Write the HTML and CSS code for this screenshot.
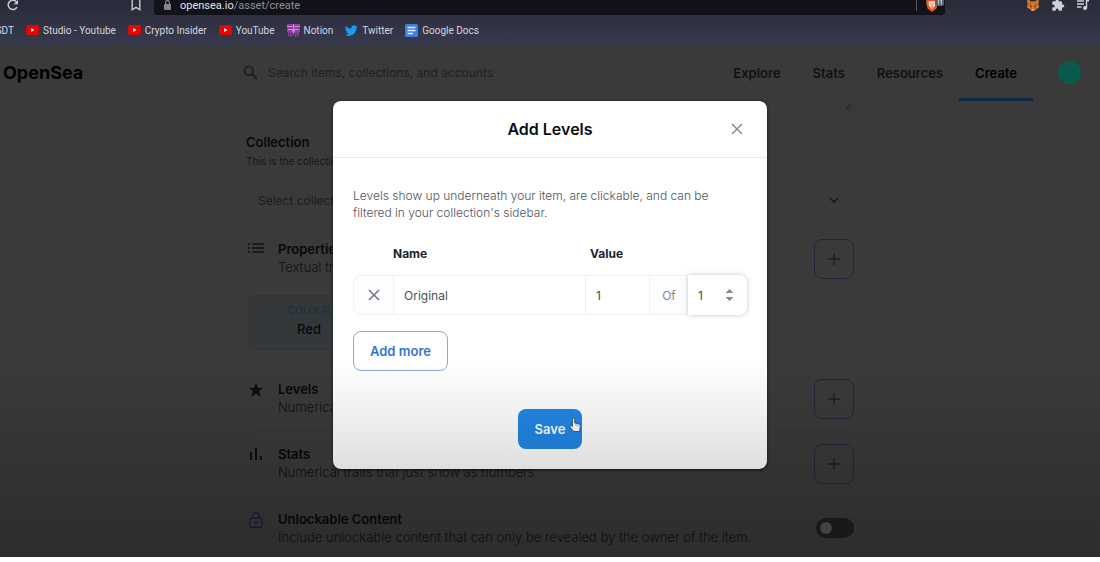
FILE: index.html
```html
<!DOCTYPE html>
<html lang="en">
<head>
<meta charset="utf-8">
<title>OpenSea - Create</title>
<link rel="stylesheet" href="styles.css">
</head>
<body>
<div class="window">
  <div class="chrome">
    <div class="toolbar">
      <button class="tool reload" aria-label="Reload"><svg width="14" height="14" viewBox="0 0 14 14"><path d="M11 7.200A4.700 4.700 0 1 1 10.600 2" fill="none" stroke="#c9cad3" stroke-width="1.500"/><path d="M12 0v4.300H7.700z" fill="#c9cad3"/></svg></button>
      <button class="tool save-page" aria-label="Bookmark this page"><svg width="10" height="14" viewBox="0 0 10 14"><path d="M1.200-1v10.800L5 7.400l3.800 2.400V-1z" fill="none" stroke="#c9cad3" stroke-width="1.400"/></svg></button>
      <div class="address">
        <svg width="9" height="12" viewBox="0 0 9 12"><rect x="1" y="4" width="7" height="6" rx="1" fill="#85868d"/><path d="M2.600 4V2.400a1.900 1.900 0 0 1 3.800 0V4" fill="none" stroke="#85868d" stroke-width="1.200"/></svg>
        <span class="url"><b>opensea.io</b>/asset/create</span>
        <span class="divider"></span>
        <button class="tool" aria-label="Brave Shields"><svg width="19" height="14" viewBox="0 0 19 14"><path d="M2-1h9l2 3-1.500 6.500L7 12 2.500 8.500 1 2z" fill="#e9561f"/><path d="M3.500 2L5 1.200h4l1.500.8-.6 4L7 9 4.100 6z" fill="#f4e5df"/><path d="M4.700 3.200l1.500.7M9.300 3.200l-1.500.7M7 4v2.300M5.800 7h2.400" stroke="#e9561f" stroke-width=".9"/><rect x="10" y="-2" width="9" height="8" rx="2" fill="#5b6070"/><path d="M12.800.7l.9-.7v4.500M15.500.7l.9-.7v4.500" fill="none" stroke="#d8dae0" stroke-width=".9"/></svg></button>
      </div>
      <div class="extensions">
        <button class="tool" aria-label="MetaMask"><svg width="14" height="12" viewBox="0 2 14 12"><path d="M1 1l4.300 2.500h3.400L13 1l-.6 5 .6 3.800-3.300 1.500L8.500 13h-3l-1.200-1.700L1 9.800 1.600 6z" fill="#d9792b"/><path d="M1.600 6l2.700.5L5.300 3.500M12.400 6l-2.700.5-1-3M4.300 6.500L5.500 11M9.700 6.500L8.500 11" fill="none" stroke="#9c4d1c" stroke-width=".7"/><path d="M5.500 11h3l-.3 1.600H5.800z" fill="#c9b5a7"/><path d="M4.500 8l1.300.5M9.500 8l-1.300.5" stroke="#33241d"/></svg></button>
        <button class="tool" aria-label="Extensions"><svg width="14" height="12" viewBox="0 3 24 21"><path fill="#d0d1d8" d="M20.500 11H19V7c0-1.100-.9-2-2-2h-4V3.500a2.500 2.500 0 0 0-5 0V5H4c-1.100 0-2 .9-2 2v3.800h1.500a2.700 2.700 0 0 1 0 5.400H2V20c0 1.100.9 2 2 2h3.800v-1.500a2.700 2.700 0 0 1 5.400 0V22H17c1.100 0 2-.9 2-2v-4h1.500a2.500 2.500 0 0 0 0-5z"/></svg></button>
        <button class="tool" aria-label="Media control"><svg width="14" height="12" viewBox="0 2 14 12"><path d="M1 3h7M1 6h7M1 9h4.500M10.500 10V2.700H13" fill="none" stroke="#d0d1d8" stroke-width="1.400"/><circle cx="9" cy="10" r="2" fill="#d0d1d8"/></svg></button>
      </div>
    </div>
    <nav class="bookmarks" aria-label="Bookmarks">
      <a class="cut" href="#">SDT</a>
      <a href="#"><svg width="13" height="10" viewBox="0 0 13 10"><rect width="13" height="10" rx="2.500" fill="#e60505"/><path d="M5.200 3v4l3.200-2z" fill="#fff"/></svg>Studio - Youtube</a>
      <a href="#"><svg width="13" height="10" viewBox="0 0 13 10"><rect width="13" height="10" rx="2.500" fill="#e60505"/><path d="M5.200 3v4l3.200-2z" fill="#fff"/></svg>Crypto Insider</a>
      <a href="#"><svg width="13" height="10" viewBox="0 0 13 10"><rect width="13" height="10" rx="2.500" fill="#e60505"/><path d="M5.200 3v4l3.200-2z" fill="#fff"/></svg>YouTube</a>
      <a href="#"><svg width="13" height="13" viewBox="0 0 13 13"><path d="M0 0h13v8h-1v4h-1.500V9.500H9.500V13H8V9.500H7V12H5.500V9.500H4.500V13H3V9H2v3H.8V8H0z" fill="#8d3f9f"/><path d="M0 2.500h5.500M7.500 2.500H13M1 5.500h4.500v2M12 5.500H7.500v2M6.500 0v9" fill="none" stroke="#d9a2e2" stroke-width=".8"/></svg>Notion</a>
      <a href="#"><svg width="13" height="13" viewBox="0 0 24 24"><path fill="#1d9bf0" d="M23.600 4.900c-.9.400-1.800.6-2.800.8 1-.6 1.800-1.600 2.200-2.700-1 .6-2 1-3.100 1.200a4.900 4.900 0 0 0-8.400 4.500A14 14 0 0 1 1.400 3.500 4.900 4.900 0 0 0 2.900 10c-.8 0-1.600-.2-2.200-.6a4.900 4.900 0 0 0 3.900 4.900c-.7.200-1.500.2-2.200.1a4.900 4.900 0 0 0 4.600 3.400A9.900 9.900 0 0 1 0 19.800 14 14 0 0 0 21.200 7.400c.9-.6 1.700-1.500 2.400-2.500z"/></svg>Twitter</a>
      <a href="#"><svg width="13" height="13" viewBox="0 0 13 13"><rect width="13" height="13" rx="1.500" fill="#3f7fe0"/><path d="M2.500 3.500h8M2.500 6.500h8M2.500 9.500h5.500" stroke="#dfeafb" stroke-width="1.300"/></svg>Google Docs</a>
    </nav>
  </div>

  <div class="site">
    <header class="header">
      <a class="brand" href="#">OpenSea</a>
      <label class="search">
        <svg width="15" height="15" viewBox="0 0 15 15"><circle cx="5.800" cy="5.800" r="4.300" fill="none" stroke="#1c1c1d" stroke-width="1.600"/><path d="M9 9l5 5" stroke="#1c1c1d" stroke-width="1.900"/></svg>
        <input type="search" placeholder="Search items, collections, and accounts" aria-label="Search">
      </label>
      <nav class="nav">
        <a href="#">Explore</a>
        <a href="#">Stats</a>
        <a href="#">Resources</a>
        <a class="current" href="#">Create</a>
      </nav>
      <button class="avatar" aria-label="Account"></button>
    </header>

    <main class="form">
      <div class="textarea-end"><svg width="8" height="8" viewBox="0 0 8 8"><path d="M1 7l6-6M4.500 7L7 4.500" stroke="#171717"/></svg></div>
      <section class="collection">
        <h2>Collection</h2>
        <p class="hint">This is the collection where your item will appear.</p>
        <button class="picker">Select collection<svg width="10" height="7" viewBox="0 0 10 7"><path d="M1 1l4 4 4-4" fill="none" stroke="#171717" stroke-width="1.600"/></svg></button>
      </section>

      <section class="trait">
        <svg class="mark" width="16" height="12" viewBox="0 0 16 12"><path d="M4 2h12M4 6h12M4 10h12M0 2h2M0 6h2M0 10h2" stroke="#121213" stroke-width="1.400"/></svg>
        <div class="about"><h2>Properties</h2><p>Textual traits that show up as rectangles</p></div>
        <button class="add" aria-label="Add properties"><svg width="12" height="12" viewBox="0 0 12 12"><path d="M6 0v12M0 6h12" stroke="#14202f" stroke-width="1.500"/></svg></button>
        <div class="property"><span>COLOUR</span><b>Red</b></div>
      </section>

      <section class="trait">
        <svg class="mark" width="16" height="16" viewBox="0 0 16 16"><path d="M8 .5l1.900 5.300h5.600L11 9.200l1.700 5.800L8 11.600 3.300 15 5 9.200.5 5.800h5.600z" fill="#0e0e0f"/></svg>
        <div class="about"><h2>Levels</h2><p>Numerical traits that show as a progress bar</p></div>
        <button class="add" aria-label="Add levels"><svg width="12" height="12" viewBox="0 0 12 12"><path d="M6 0v12M0 6h12" stroke="#14202f" stroke-width="1.500"/></svg></button>
      </section>

      <section class="trait">
        <svg class="mark" width="16" height="14" viewBox="0 0 16 14"><path d="M3 5v8M8 1v12M13 9v4" stroke="#0e0e0f" stroke-width="2"/></svg>
        <div class="about"><h2>Stats</h2><p>Numerical traits that just show as numbers</p></div>
        <button class="add" aria-label="Add stats"><svg width="12" height="12" viewBox="0 0 12 12"><path d="M6 0v12M0 6h12" stroke="#14202f" stroke-width="1.500"/></svg></button>
      </section>

      <section class="trait">
        <svg class="mark" width="16" height="18" viewBox="0 0 16 18"><rect x="2" y="6" width="12" height="9.500" rx="1.500" fill="none" stroke="#1d1b3c" stroke-width="1.400"/><path d="M5 3.500a3 3 0 0 1 6 0V6" fill="none" stroke="#1d1b3c" stroke-width="1.300"/><circle cx="8" cy="10.700" r="1.500" fill="#1d1b3c"/></svg>
        <div class="about"><h2><label for="unlockable">Unlockable Content</label></h2><p>Include unlockable content that can only be revealed by the owner of the item.</p></div>
        <input class="switch" id="unlockable" type="checkbox" role="switch">
      </section>
    </main>

    <div class="overlay">
      <div class="modal" role="dialog" aria-labelledby="modal-title">
        <div class="modal-head">
          <h1 id="modal-title">Add Levels</h1>
          <button class="close" aria-label="Close"><svg width="12" height="12" viewBox="0 0 12 12"><path d="M1 1l10 10M11 1L1 11" stroke="#8b8c8e" stroke-width="1.500"/></svg></button>
        </div>
        <form class="modal-body">
          <p class="intro">Levels show up underneath your item, are clickable, and can be filtered in your collection's sidebar.</p>
          <table class="levels">
            <colgroup><col class="c-remove"><col><col class="c-value"><col class="c-of"><col class="c-max"></colgroup>
            <thead><tr><td></td><th id="name">Name</th><th id="value" class="value-head">Value</th><td></td><td></td></tr></thead>
            <tbody><tr>
              <td class="remove"><button type="button" aria-label="Remove level"><svg width="12" height="12" viewBox="0 0 12 12"><path d="M1 1l10 10M11 1L1 11" stroke="#707277" stroke-width="1.500"/></svg></button></td>
              <td><input type="text" value="Original" aria-labelledby="name"></td>
              <td><input type="number" value="1" aria-labelledby="value"></td>
              <td class="of">Of</td>
              <td class="max"><input type="number" value="1" aria-label="Maximum"></td>
            </tr></tbody>
          </table>
          <button type="button" class="more">Add more</button>
          <div class="actions">
            <button type="button" class="save">Save<svg class="pointer" width="12" height="16" viewBox="0 0 12 16"><path d="M3.500 9.500V2a1.100 1.100 0 0 1 2.200 0v4l4.200 1c1 .3 1.500.9 1.400 1.900l-.7 5.600H4.800L1 10c-.5-1 .8-1.800 1.600-1.100z" fill="#fff" stroke="#2c4762" stroke-width=".8"/><path d="M7 7v2M9 7.500v2" stroke="#6c7884" stroke-width=".6"/></svg></button>
          </div>
        </form>
      </div>
    </div>
  </div>
  <div class="shade"></div>
</div>
</body>
</html>
```
FILE: styles.css
```css
* { box-sizing: border-box; }
body { margin: 0; background: #fff; font-family: Inter, "Noto Sans", sans-serif; font-size: 13px; }
h1, h2, p { margin: 0; }
a { color: inherit; text-decoration: none; }
button { padding: 0; border: 0; background: none; font: inherit; color: inherit; }
input { font: inherit; color: inherit; border: 0; background: none; outline: 0; min-width: 0; }
svg { display: block; flex: none; }

.window { position: relative; display: flex; flex-direction: column; height: calc(100vh - 5px); overflow: hidden; background: #3a3a3a; }

/* Browser chrome */
.chrome { flex: none; background: linear-gradient(#292b38, #37394e); font-family: Roboto, "Open Sans", sans-serif; color: #d5d6de; }
.toolbar { display: flex; height: 15px; }
.tool { display: block; height: 12px; flex: none; }
.reload { margin-left: 6px; }
.save-page { margin-left: 111px; }
.address { display: flex; flex: 1; gap: 8px; margin-left: 13px; padding: 0 1px 3px 9px; background: #12131a; border-radius: 0 0 3px 3px; }
.url { flex: 1; font-size: 11px; line-height: 12px; color: #8e8f97; }
.url b { font-weight: 400; color: #e2e3e8; }
.divider { width: 1px; height: 11px; background: #54555c; }
.extensions { display: flex; gap: 11px; margin: 0 10px 0 81px; }
.bookmarks { display: flex; align-items: center; gap: 12px; height: 30px; font-size: 10px; }
.bookmarks a { display: flex; align-items: center; gap: 4px; white-space: nowrap; }
.bookmarks .cut { width: 14px; justify-content: flex-end; overflow: hidden; }

/* Site header */
.site { position: relative; flex: 1; min-height: 0; overflow: hidden; }
.header { display: flex; align-items: center; height: 56px; padding-right: 19px; border-bottom: 1px solid #363636; }
.brand { flex: none; width: 238px; padding-left: 3px; font-size: 18px; font-weight: 700; color: #000; }
.search { display: flex; flex: 1; align-items: center; gap: 10px; height: 34px; padding-left: 4px; border: 1px solid #383838; border-radius: 8px; }
.search input { flex: 1; padding: 0; font-size: 12px; }
.search input::placeholder { color: #202021; opacity: 1; }
.nav { display: flex; height: 56px; font-weight: 600; color: #111; }
.nav a { display: flex; align-items: center; padding: 0 16px; border-bottom: 3px solid transparent; border-top: 3px solid transparent; }
.nav .current { color: #000; border-bottom-color: #0c2748; }
.avatar { width: 23px; height: 23px; margin-left: 25px; border-radius: 50%; background: #0a5b4d; }

/* Item form */
.form { width: 608px; margin: 0 auto; color: #111; }
.form h2 { font-size: 13px; line-height: 18px; font-weight: 600; color: #080808; }
.textarea-end { display: flex; justify-content: flex-end; height: 12px; padding: 2px 2px 0 0; border-bottom: 1px solid #383838; }
.collection { padding: 20px 0 7px; }
.hint { font-size: 10px; line-height: 20px; color: #171717; }
.picker { display: flex; align-items: center; justify-content: space-between; width: 100%; height: 40px; margin-top: 9px; padding: 0 14px 0 11px; border: 1px solid #393939; border-radius: 8px; font-size: 12px; color: #1d1d1d; }
.trait { display: grid; grid-template-columns: 20px 1fr 40px; column-gap: 12px; align-items: center; padding: 12px 0; border-bottom: 1px solid #373737; }
.mark { align-self: start; justify-self: center; margin-top: 3px; }
.about { align-self: start; padding-top: 1px; line-height: 18px; font-weight: 300; white-space: nowrap; }
.add { display: grid; place-items: center; width: 40px; height: 40px; border: 1px solid #222638; border-radius: 8px; }
.property { grid-column: 1 / 3; width: 120px; height: 55px; margin: 16px 0 4px 3px; padding-top: 5px; display: flex; flex-direction: column; align-items: center; border: 1px solid #2b353b; border-radius: 6px; background: #34383a; line-height: 19px; }
.property span { font-size: 10px; color: #17303e; }
.property b { font-weight: 500; color: #080808; }
.switch { appearance: none; width: 38px; height: 20px; margin: 0 0 0 2px; padding: 4px; border-radius: 10px; background: #1e1e1e; }
.switch::before { content: ""; display: block; width: 12px; height: 12px; border-radius: 50%; background: #525252; }

/* Dialog */
.overlay { position: absolute; inset: 0; display: flex; justify-content: center; align-items: flex-start; padding-top: 56px; }
.modal { width: 434px; background: #fff; border-radius: 8px; box-shadow: 0 1px 3px #111; }
.modal-head { position: relative; display: flex; justify-content: center; align-items: center; height: 57px; border-bottom: 1px solid #e9eaeb; }
.modal-head h1 { font-size: 16px; font-weight: 600; color: #0b0d10; }
.close { position: absolute; right: 24px; }
.modal-body { padding: 29px 20px 20px; }
.intro { font-size: 12px; line-height: 17px; font-weight: 300; color: #505358; }
.levels { width: 100%; margin-top: 20px; table-layout: fixed; border-spacing: 0; }
.c-remove { width: 40px; }
.c-value { width: 64px; }
.c-of { width: 39px; }
.c-max { width: 59px; }
.levels td, .levels th { padding: 0; }
.levels th { height: 34px; padding-bottom: 9px; font-size: 12px; font-weight: 700; text-align: left; color: #20242a; }
.levels .value-head { padding-left: 5px; }
.levels tbody td { height: 40px; border: 1px solid #f0f1f4; border-right: 0; color: #4c4e52; }
.levels input { display: block; width: 100%; height: 38px; padding: 0 10px; font-size: 12px; }
.levels input[type="number"]::-webkit-inner-spin-button { opacity: 0; }
.levels .max input::-webkit-inner-spin-button { opacity: 1; }
.levels .remove { background: #fbfdff; border-radius: 8px 0 0 8px; }
.remove button { display: grid; place-items: center; width: 100%; height: 38px; }
.levels .of { background: #fbfdff; text-align: center; font-size: 12px; color: #85878b; }
.levels .max { border: 0; border-radius: 0 8px 8px 0; box-shadow: 0 0 5px #c4c5c8; background: #fff; }
.more { height: 40px; margin-top: 16px; padding: 0 16px; border: 1px solid #86a9dc; border-radius: 8px; font-weight: 600; color: #3474cf; }
.actions { display: flex; justify-content: center; margin-top: 38px; }
.save { position: relative; height: 40px; padding: 0 17px; border-radius: 8px; background: #2287e6; font-weight: 600; color: #fff; }
.pointer { position: absolute; right: 1px; top: 8px; }

.shade { position: absolute; inset: 65% 0 0; background: linear-gradient(transparent, rgba(0, 0, 0, .23)); pointer-events: none; }
```
